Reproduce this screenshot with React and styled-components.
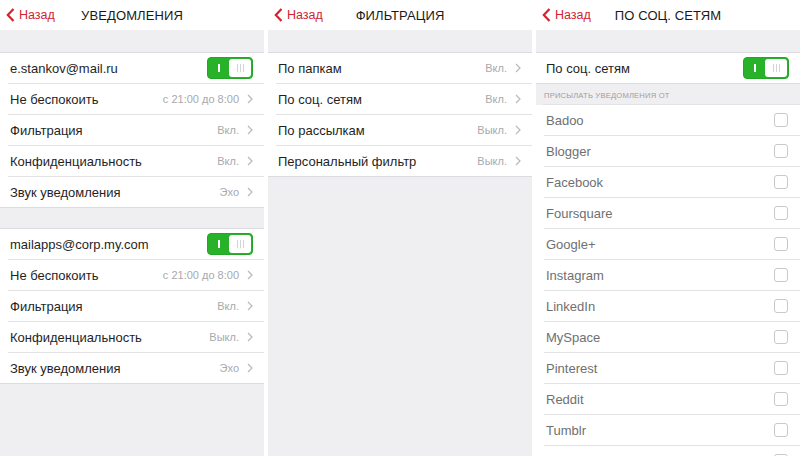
import React from "react";
import styled, { createGlobalStyle } from "styled-components";

const Global = createGlobalStyle`
  html, body { margin: 0; padding: 0; background: #ffffff; }
  body { font-family: "Liberation Sans", Arial, sans-serif; }
  * { box-sizing: border-box; }
`;

const Page = styled.div`
  display: grid;
  grid-template-columns: 264px 264px 264px;
  column-gap: 4px;
  width: 800px;
  height: 456px;
  overflow: hidden;
  background: #ffffff;
`;

const Panel = styled.div`
  display: flex;
  flex-direction: column;
  background: #efeff2;
  height: 456px;
  overflow: hidden;
`;

const Header = styled.div`
  position: relative;
  height: 30px;
  flex: none;
  background: #ffffff;
  display: flex;
  align-items: center;
  justify-content: center;
`;

const Back = styled.div`
  position: absolute;
  left: 6px;
  top: 0;
  height: 30px;
  display: flex;
  align-items: center;
  gap: 4px;
  color: #d3232f;
  font-size: 12.5px;
`;

const Title = styled.div`
  font-size: 13px;
  color: #1a1a1a;
  letter-spacing: 0.1px;
`;

const Spacer = styled.div`
  height: ${(p) => p.$h}px;
  flex: none;
`;

const Group = styled.div`
  background: #ffffff;
  border-top: 1px solid #dcdce0;
  border-bottom: 1px solid #dcdce0;
  flex: none;
`;

const Row = styled.div`
  height: 30px;
  display: flex;
  align-items: center;
  padding: 0 11px 0 10px;
  position: relative;
  & + & {
    margin-top: 1px;
  }
  & + &::before {
    content: "";
    position: absolute;
    left: 8px;
    right: 0;
    top: -1px;
    border-top: 1px solid #e3e3e6;
  }
`;

const Label = styled.div`
  flex: 1;
  font-size: 13px;
  color: ${(p) => (p.$muted ? "#6f6f72" : "#1f1f1f")};
  white-space: nowrap;
`;

const Value = styled.div`
  font-size: 11px;
  color: #a9a9ad;
  margin-right: 8px;
  white-space: nowrap;
`;

const SectionHead = styled.div`
  position: relative;
  height: 21px;
  flex: none;
  display: flex;
  align-items: flex-end;
  padding: 0 0 5px 8px;
  font-size: 7.6px;
  color: #9d9da2;
  letter-spacing: 0.2px;
  &::after {
    content: "";
    position: absolute;
    left: 7px;
    right: 0;
    bottom: 0;
    border-top: 1px solid #e3e3e6;
  }
`;

const List = styled.div`
  background: #ffffff;
  flex: 1;
`;

const ToggleBox = styled.div`
  width: 46px;
  height: 22px;
  border-radius: 4px;
  background: #27b22a;
  border: 1px solid #23a826;
  display: flex;
  align-items: center;
  padding: 1px;
`;

const ToggleOn = styled.div`
  flex: 1;
  display: flex;
  justify-content: center;
  align-items: center;
  &::after {
    content: "";
    width: 2px;
    height: 8px;
    background: #ffffff;
  }
`;

const Knob = styled.div`
  width: 22px;
  height: 18px;
  border-radius: 3px;
  background: #ffffff;
  display: flex;
  justify-content: center;
  align-items: center;
  gap: 2px;
`;

const Tick = styled.span`
  width: 1px;
  height: 8px;
  background: #d3d3d6;
`;

const Check = styled.div`
  width: 14px;
  height: 14px;
  border: 1px solid #c9c9cd;
  border-radius: 3px;
  background: #ffffff;
  margin-right: 1px;
`;

const Chevron = () => (
  <svg width="6" height="10" viewBox="0 0 6 10">
    <polyline points="1,1 5,5 1,9" fill="none" stroke="#b8b8bd" strokeWidth="1.2" />
  </svg>
);

const BackChevron = () => (
  <svg width="9" height="14" viewBox="0 0 9 14">
    <polyline points="7.5,1 1.8,7 7.5,13" fill="none" stroke="#d3232f" strokeWidth="2.2" />
  </svg>
);

const Toggle = () => (
  <ToggleBox>
    <ToggleOn />
    <Knob>
      <Tick />
      <Tick />
      <Tick />
    </Knob>
  </ToggleBox>
);

const Nav = ({ title }) => (
  <Header>
    <Back>
      <BackChevron />
      <span>Назад</span>
    </Back>
    <Title>{title}</Title>
  </Header>
);

const DetailRow = ({ label, value }) => (
  <Row>
    <Label>{label}</Label>
    <Value>{value}</Value>
    <Chevron />
  </Row>
);

const Account = ({ email, privacy }) => (
  <Group>
    <Row>
      <Label>{email}</Label>
      <Toggle />
    </Row>
    <DetailRow label="Не беспокоить" value="с 21:00 до 8:00" />
    <DetailRow label="Фильтрация" value="Вкл." />
    <DetailRow label="Конфиденциальность" value={privacy} />
    <DetailRow label="Звук уведомления" value="Эхо" />
  </Group>
);

const socials = [
  "Badoo",
  "Blogger",
  "Facebook",
  "Foursquare",
  "Google+",
  "Instagram",
  "LinkedIn",
  "MySpace",
  "Pinterest",
  "Reddit",
  "Tumblr",
  "",
];

export default function App() {
  return (
    <>
      <Global />
      <Page>
        <Panel>
          <Nav title="УВЕДОМЛЕНИЯ" />
          <Spacer $h={22} />
          <Account email="e.stankov@mail.ru" privacy="Вкл." />
          <Spacer $h={20} />
          <Account email="mailapps@corp.my.com" privacy="Выкл." />
        </Panel>
        <Panel>
          <Nav title="ФИЛЬТРАЦИЯ" />
          <Spacer $h={22} />
          <Group>
            <DetailRow label="По папкам" value="Вкл." />
            <DetailRow label="По соц. сетям" value="Вкл." />
            <DetailRow label="По рассылкам" value="Выкл." />
            <DetailRow label="Персональный фильтр" value="Выкл." />
          </Group>
        </Panel>
        <Panel>
          <Nav title="ПО СОЦ. СЕТЯМ" />
          <Spacer $h={22} />
          <Group>
            <Row>
              <Label>По соц. сетям</Label>
              <Toggle />
            </Row>
          </Group>
          <SectionHead>ПРИСЫЛАТЬ УВЕДОМЛЕНИЯ ОТ</SectionHead>
          <List>
            {socials.map((s, i) => (
              <Row key={i}>
                <Label $muted>{s}</Label>
                <Check />
              </Row>
            ))}
          </List>
        </Panel>
      </Page>
    </>
  );
}
